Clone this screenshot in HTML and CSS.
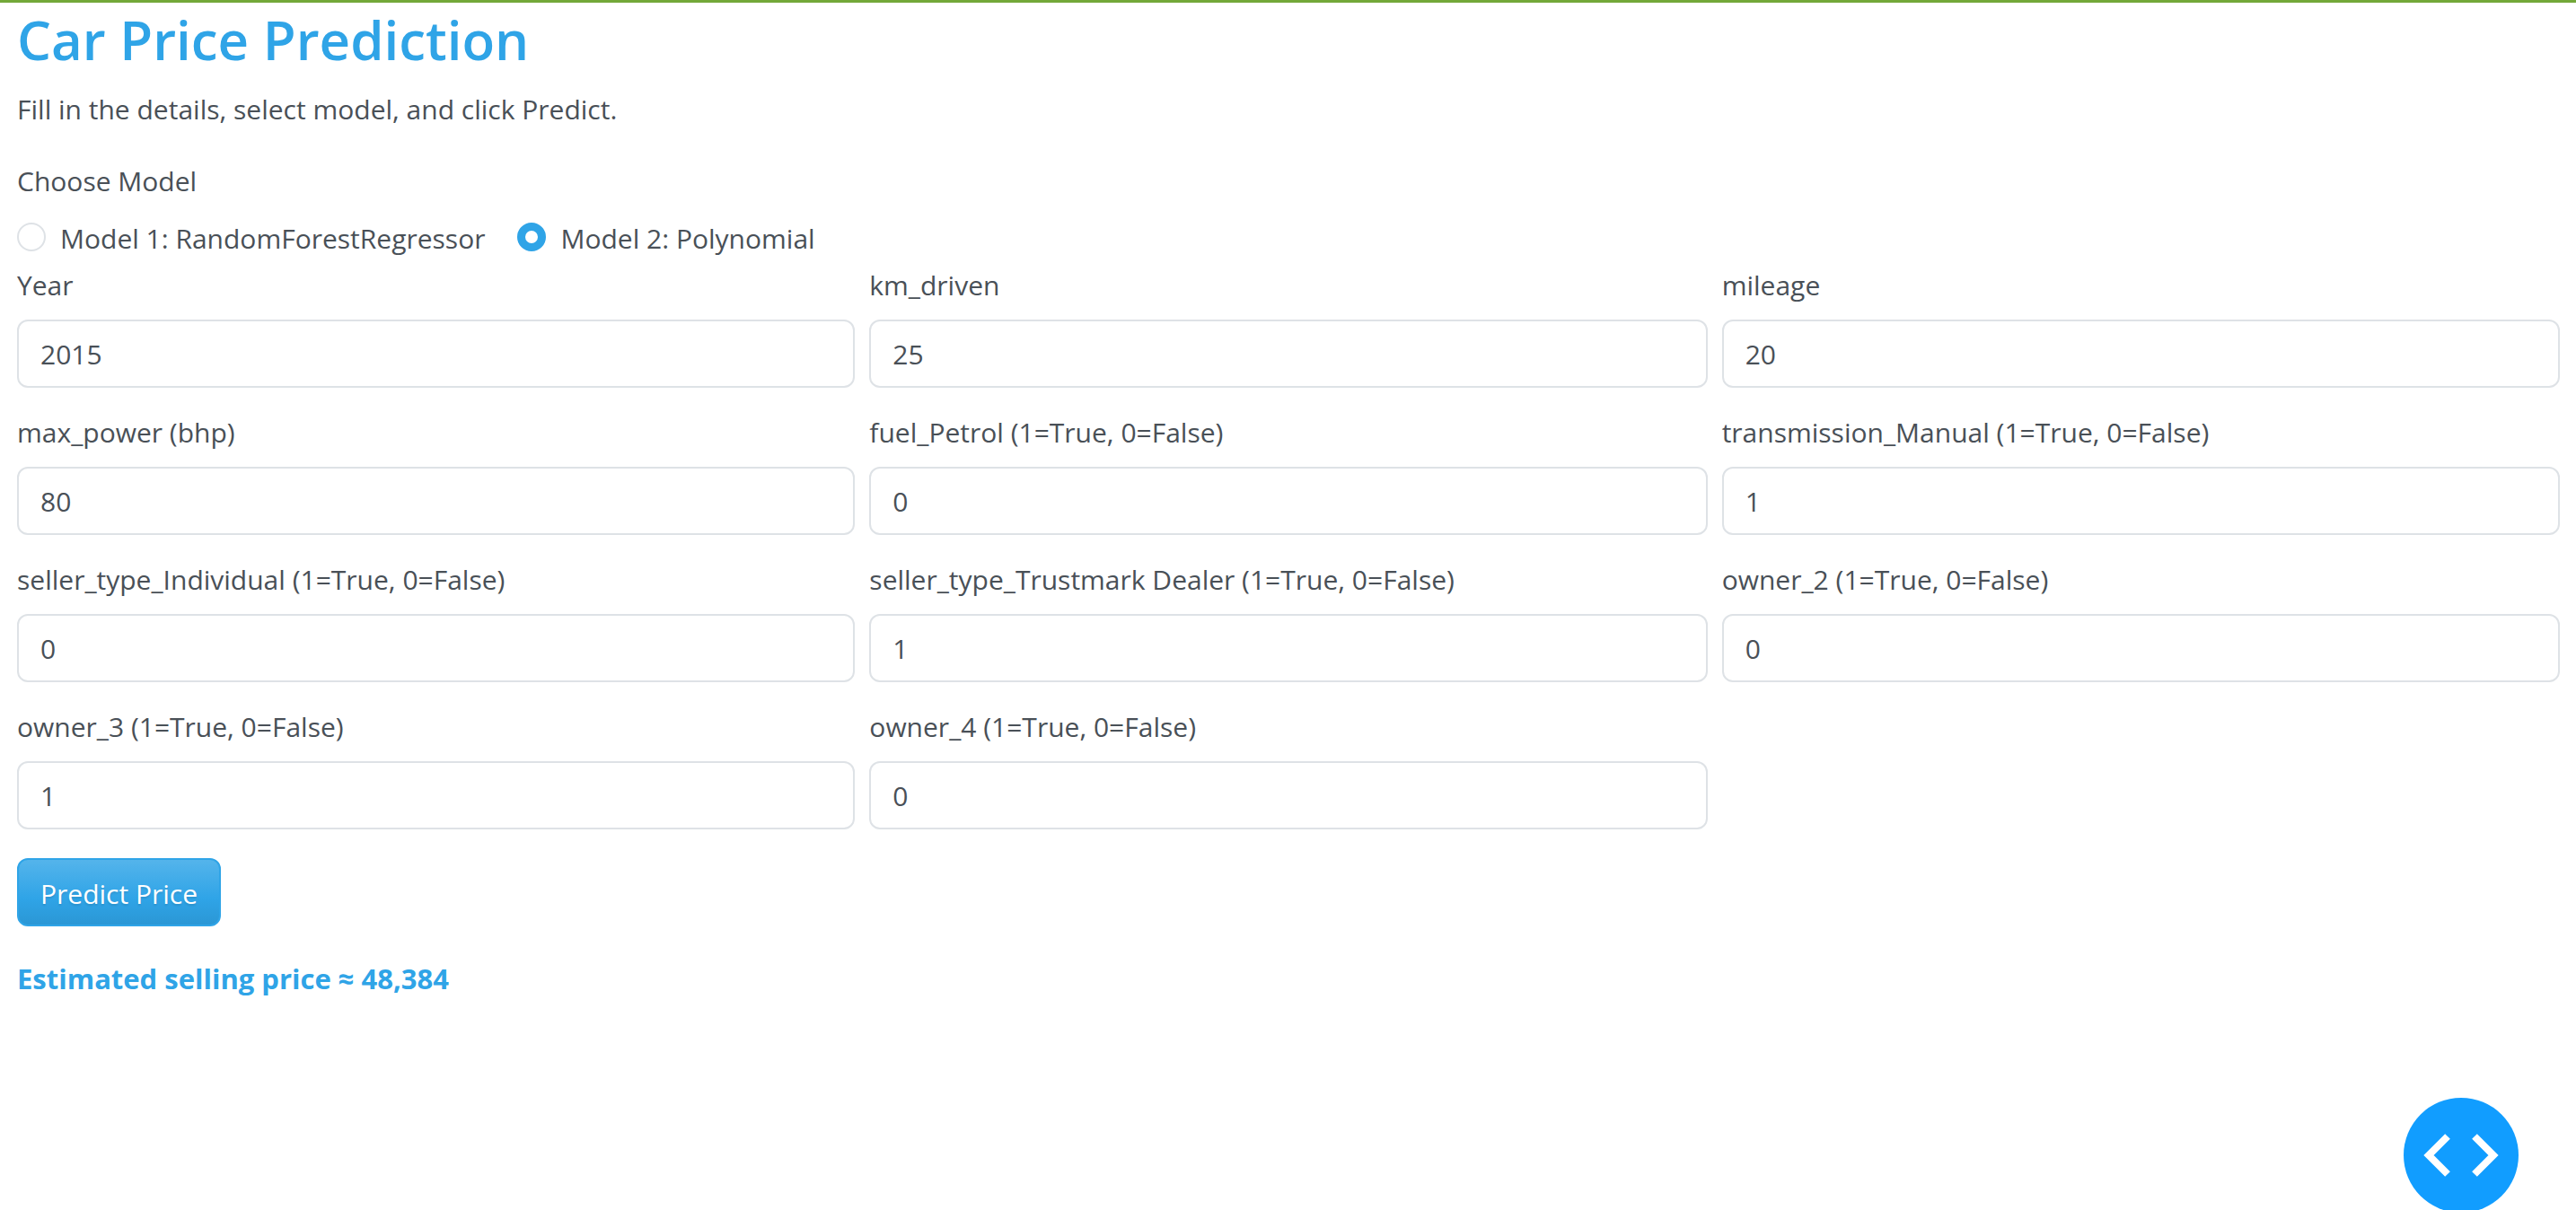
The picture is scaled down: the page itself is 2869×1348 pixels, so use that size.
FILE: index.html
```html
<!DOCTYPE html>
<html lang="en">
<head>
<meta charset="utf-8">
<title>Car Price Prediction</title>
<link rel="stylesheet" href="styles.css">
</head>
<body>
<main class="page">
  <h1 class="title">Car Price Prediction</h1>
  <p class="intro">Fill in the details, select model, and click Predict.</p>
  <form class="form">
    <fieldset class="models">
      <legend class="models-title">Choose Model</legend>
      <div class="options">
        <label class="option"><input class="radio" type="radio" name="model" value="1"><span>Model 1: RandomForestRegressor</span></label>
        <label class="option"><input class="radio" type="radio" name="model" value="2" checked><span>Model 2: Polynomial</span></label>
      </div>
    </fieldset>
    <div class="fields">
      <div class="field"><label class="label" for="year">Year</label><input class="input" id="year" type="text" value="2015"></div>
      <div class="field"><label class="label" for="km">km_driven</label><input class="input" id="km" type="text" value="25"></div>
      <div class="field"><label class="label" for="mileage">mileage</label><input class="input" id="mileage" type="text" value="20"></div>
      <div class="field"><label class="label" for="power">max_power (bhp)</label><input class="input" id="power" type="text" value="80"></div>
      <div class="field"><label class="label" for="petrol">fuel_Petrol (1=True, 0=False)</label><input class="input" id="petrol" type="text" value="0"></div>
      <div class="field"><label class="label" for="manual">transmission_Manual (1=True, 0=False)</label><input class="input" id="manual" type="text" value="1"></div>
      <div class="field"><label class="label" for="individual">seller_type_Individual (1=True, 0=False)</label><input class="input" id="individual" type="text" value="0"></div>
      <div class="field"><label class="label" for="trustmark">seller_type_Trustmark Dealer (1=True, 0=False)</label><input class="input" id="trustmark" type="text" value="1"></div>
      <div class="field"><label class="label" for="owner2">owner_2 (1=True, 0=False)</label><input class="input" id="owner2" type="text" value="0"></div>
      <div class="field"><label class="label" for="owner3">owner_3 (1=True, 0=False)</label><input class="input" id="owner3" type="text" value="1"></div>
      <div class="field"><label class="label" for="owner4">owner_4 (1=True, 0=False)</label><input class="input" id="owner4" type="text" value="0"></div>
    </div>
    <button class="predict" type="button">Predict Price</button>
  </form>
  <p class="result">Estimated selling price ≈ 48,384</p>
</main>
<button class="debug" type="button" aria-label="Developer tools">
  <svg class="debug-icon" viewBox="0 0 128 128" aria-hidden="true">
    <path d="M49 43 28 64l21 21M79 43l21 21-21 21" fill="none" stroke="#fff" stroke-width="8"/>
  </svg>
</button>
</body>
</html>
```
FILE: styles.css
```css
* {
  box-sizing: border-box;
}

html {
  overflow: hidden auto;
  scrollbar-width: none;
}

body {
  margin: 0;
  border-top: 3px solid #73a839;
  background: #fff;
  color: #495057;
  font: 30px/52px "Open Sans", "Noto Sans", sans-serif;
}

.page {
  padding: 1px 18px 32px 19px;
}

.title {
  margin: 0 0 12px;
  color: #2fa4e7;
  font-size: 60px;
  line-height: 80px;
  font-weight: 600;
}

.intro {
  margin: 0 0 28px;
}

.models {
  min-width: 0;
  margin: 0;
  padding: 0;
  border: 0;
}

.models-title {
  padding: 0;
  margin-bottom: 12px;
}

.options {
  display: flex;
  flex-wrap: wrap;
  gap: 36px;
}

.option {
  display: flex;
  gap: 16px;
}

.radio {
  appearance: none;
  flex: none;
  width: 32px;
  height: 32px;
  margin: 8px 0;
  border: 2px solid #dee2e6;
  border-radius: 50%;
  background: #fff;
}

.radio:checked {
  border: 9px solid #2fa4e7;
}

.fields {
  display: grid;
  grid-template-columns: repeat(3, minmax(0, 1fr));
  gap: 24px 16px;
}

.field {
  display: flex;
  flex-direction: column;
  gap: 12px;
}

.input {
  width: 100%;
  height: 76px;
  padding: 12px 24px;
  border: 2px solid #dee2e6;
  border-radius: 12px;
  background: #fff;
  color: inherit;
  font: inherit;
}

.predict {
  display: block;
  height: 76px;
  margin: 32px 0;
  padding: 12px 24px 8px;
  border: 2px solid #2fa4e7;
  border-radius: 12px;
  background: linear-gradient(#54b4eb, #2fa4e7 60%, #2b97d5);
  color: #fff;
  font: inherit;
  text-shadow: 0 2px 2px rgba(0, 0, 0, 0.1);
}

.result {
  margin: 0;
  color: #2fa4e7;
  font-size: 31px;
  font-weight: 700;
}

.debug {
  position: fixed;
  right: 64px;
  bottom: -3px;
  width: 128px;
  height: 128px;
  padding: 0;
  border: 0;
  border-radius: 50%;
  background: #119dff;
}

.debug-icon {
  display: block;
}
```
